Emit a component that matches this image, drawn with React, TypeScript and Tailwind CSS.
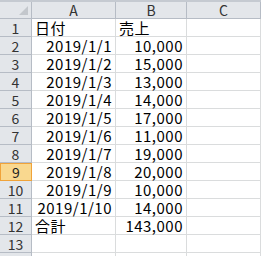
import React from "react";

const rows: [string, string][] = [
  ["日付", "売上"],
  ["2019/1/1", "10,000"],
  ["2019/1/2", "15,000"],
  ["2019/1/3", "13,000"],
  ["2019/1/4", "14,000"],
  ["2019/1/5", "17,000"],
  ["2019/1/6", "11,000"],
  ["2019/1/7", "19,000"],
  ["2019/1/8", "20,000"],
  ["2019/1/9", "10,000"],
  ["2019/1/10", "14,000"],
  ["合計", "143,000"],
  ["", ""],
  ["", ""],
];

const font = { fontFamily: '"Noto Sans CJK JP", "Liberation Sans", sans-serif' };

const App = () => {
  return (
    <div className="w-[261px] h-[256px] overflow-hidden bg-white text-[15px] leading-none" style={font}>
      <div className="h-[2px] bg-[#c5cad1]" />
      {/* column headers */}
      <div className="flex h-[17px]">
        <div className="relative w-[32px] shrink-0 bg-[#e3e6ea] border-r border-b border-[#b6bcc5]">
          <div className="absolute right-[3px] bottom-[3px] w-0 h-0 border-l-[9px] border-l-transparent border-b-[9px] border-b-[#c3c7cc]" />
        </div>
        {["A", "B", "C"].map((c, i) => (
          <div
            key={c}
            className={`flex items-center justify-center shrink-0 bg-[#e3e6ea] border-r border-b border-[#b6bcc5] text-[#333] text-[14px] ${
              i === 0 ? "w-[84px]" : i === 1 ? "w-[71px]" : "w-[74px]"
            }`}
          >
            {c}
          </div>
        ))}
      </div>
      {rows.map(([a, b], i) => {
        const sel = i === 8;
        const left = i === 0 || i === 11;
        return (
          <div key={i} className="flex h-[18px]">
            <div
              className={`flex items-center justify-center w-[32px] shrink-0 text-[14px] ${
                sel
                  ? "bg-[#f9d88f] border border-[#f0a33a] text-[#222]"
                  : "bg-[#e3e6ea] border-r border-b border-[#b6bcc5] text-[#333]"
              }`}
            >
              {i < 13 ? i + 1 : ""}
            </div>
            <div
              className={`flex items-center w-[84px] shrink-0 border-r border-b border-[#dadcdd] px-[3px] tracking-[0.5px] ${
                left ? "justify-start" : "justify-end"
              }`}
            >
              {a}
            </div>
            <div
              className={`flex items-center w-[71px] shrink-0 border-r border-b border-[#dadcdd] px-[3px] tracking-[0.5px] ${
                i === 0 ? "justify-start" : "justify-end"
              }`}
            >
              {b}
            </div>
            <div className="w-[74px] shrink-0 border-r border-b border-[#dadcdd]" />
          </div>
        );
      })}
    </div>
  );
};

export default App;
